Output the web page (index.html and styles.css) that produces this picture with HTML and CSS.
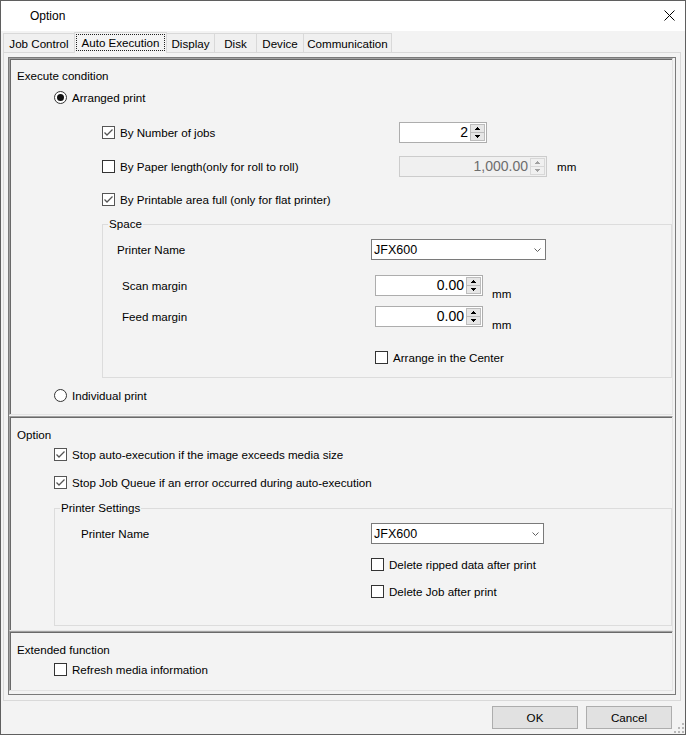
FILE: index.html
```html
<!DOCTYPE html>
<html>
<head>
<meta charset="utf-8">
<title>Option</title>
<link rel="stylesheet" href="styles.css">
</head>
<body>
<div class="window">
  <div class="titlebar">
    <span class="title">Option</span>
    <svg class="close" width="11" height="11" viewBox="0 0 11 11"><path d="M0.5 0.5 L10.5 10.5 M10.5 0.5 L0.5 10.5" stroke="#000" stroke-width="1" fill="none"/></svg>
  </div>

  <div class="tabstrip">
    <div class="tab t1">Job Control</div>
    <div class="tab t2 sel"><span class="focus">Auto Execution</span></div>
    <div class="tab t3">Display</div>
    <div class="tab t4">Disk</div>
    <div class="tab t5">Device</div>
    <div class="tab t6">Communication</div>
  </div>

  <div class="tabpage">
    <div class="frame">

      <div class="panel p1">
        <div class="row head">Execute condition</div>
        <div class="row ind-radio">
          <svg class="rb" width="13" height="13" viewBox="0 0 13 13"><circle cx="6.5" cy="6.5" r="6" fill="#fff" stroke="#333"/><circle cx="6.5" cy="6.5" r="3.5" fill="#111"/></svg>
          <span class="txt">Arranged print</span>
        </div>
        <div class="row ind-sub r-jobs">
          <span class="chk w-opt">
            <span class="cb on"><svg width="11" height="11" viewBox="0 0 11 11"><path d="M1.5 5.5 L4 8 L9.5 2.5" stroke="#555" stroke-width="1.3" fill="none"/></svg></span>
            <span class="txt">By Number of jobs</span>
          </span>
          <div class="spin s-jobs">
            <span class="val">2</span>
            <span class="sbtns">
              <span class="sb"><svg width="5" height="3" viewBox="0 0 5 3"><path d="M2 0h1v1h-1z M1 1h3v1h-3z M0 2h5v1h-5z" fill="#000"/></svg></span>
              <span class="sb"><svg width="5" height="3" viewBox="0 0 5 3"><path d="M0 0h5v1h-5z M1 1h3v1h-3z M2 2h1v1h-1z" fill="#000"/></svg></span>
            </span>
          </div>
        </div>
        <div class="row ind-sub r-paper">
          <span class="chk w-opt">
            <span class="cb"></span>
            <span class="txt">By Paper length(only for roll to roll)</span>
          </span>
          <div class="spin s-paper disabled">
            <span class="val">1,000.00</span>
            <span class="sbtns">
              <span class="sb"><svg width="5" height="3" viewBox="0 0 5 3"><path d="M2 0h1v1h-1z M1 1h3v1h-3z M0 2h5v1h-5z" fill="#a0a0a0"/></svg></span>
              <span class="sb"><svg width="5" height="3" viewBox="0 0 5 3"><path d="M0 0h5v1h-5z M1 1h3v1h-3z M2 2h1v1h-1z" fill="#a0a0a0"/></svg></span>
            </span>
          </div>
          <span class="mm mm-paper">mm</span>
        </div>
        <div class="row ind-sub r-area">
          <span class="chk">
            <span class="cb on"><svg width="11" height="11" viewBox="0 0 11 11"><path d="M1.5 5.5 L4 8 L9.5 2.5" stroke="#555" stroke-width="1.3" fill="none"/></svg></span>
            <span class="txt">By Printable area full (only for flat printer)</span>
          </span>
        </div>

        <fieldset class="group g-space">
          <legend>Space</legend>
          <div class="frow r-sp-printer">
            <span class="flabel w-sp-printer">Printer Name</span>
            <div class="combo c-space"><span>JFX600</span><svg width="7" height="4" viewBox="0 0 7 4"><path d="M0.5 0.5 L3.5 3.5 L6.5 0.5" stroke="#606060" fill="none"/></svg></div>
          </div>
          <div class="frow r-scan">
            <span class="flabel w-margin">Scan margin</span>
            <div class="spin s-margin">
              <span class="val">0.00</span>
              <span class="sbtns">
                <span class="sb"><svg width="5" height="3" viewBox="0 0 5 3"><path d="M2 0h1v1h-1z M1 1h3v1h-3z M0 2h5v1h-5z" fill="#000"/></svg></span>
                <span class="sb"><svg width="5" height="3" viewBox="0 0 5 3"><path d="M0 0h5v1h-5z M1 1h3v1h-3z M2 2h1v1h-1z" fill="#000"/></svg></span>
              </span>
            </div>
            <span class="mm mm-low">mm</span>
          </div>
          <div class="frow r-feed">
            <span class="flabel w-margin">Feed margin</span>
            <div class="spin s-margin">
              <span class="val">0.00</span>
              <span class="sbtns">
                <span class="sb"><svg width="5" height="3" viewBox="0 0 5 3"><path d="M2 0h1v1h-1z M1 1h3v1h-3z M0 2h5v1h-5z" fill="#000"/></svg></span>
                <span class="sb"><svg width="5" height="3" viewBox="0 0 5 3"><path d="M0 0h5v1h-5z M1 1h3v1h-3z M2 2h1v1h-1z" fill="#000"/></svg></span>
              </span>
            </div>
            <span class="mm mm-low">mm</span>
          </div>
          <div class="row r-center">
            <span class="cb"></span>
            <span class="txt">Arrange in the Center</span>
          </div>
        </fieldset>

        <div class="row ind-radio r-indiv">
          <svg class="rb" width="13" height="13" viewBox="0 0 13 13"><circle cx="6.5" cy="6.5" r="6" fill="#fff" stroke="#333"/></svg>
          <span class="txt">Individual print</span>
        </div>
      </div>

      <div class="panel p2">
        <div class="row head short">Option</div>
        <div class="row ind-radio short">
          <span class="cb on"><svg width="11" height="11" viewBox="0 0 11 11"><path d="M1.5 5.5 L4 8 L9.5 2.5" stroke="#555" stroke-width="1.3" fill="none"/></svg></span>
          <span class="txt">Stop auto-execution if the image exceeds media size</span>
        </div>
        <div class="row ind-radio short r-queue">
          <span class="cb on"><svg width="11" height="11" viewBox="0 0 11 11"><path d="M1.5 5.5 L4 8 L9.5 2.5" stroke="#555" stroke-width="1.3" fill="none"/></svg></span>
          <span class="txt">Stop Job Queue if an error occurred during auto-execution</span>
        </div>

        <fieldset class="group g-printer">
          <legend>Printer Settings</legend>
          <div class="frow r-ps-printer">
            <span class="flabel w-ps-printer">Printer Name</span>
            <div class="combo c-ps"><span>JFX600</span><svg width="7" height="4" viewBox="0 0 7 4"><path d="M0.5 0.5 L3.5 3.5 L6.5 0.5" stroke="#606060" fill="none"/></svg></div>
          </div>
          <div class="row r-del1">
            <span class="cb"></span>
            <span class="txt">Delete ripped data after print</span>
          </div>
          <div class="row r-del2">
            <span class="cb"></span>
            <span class="txt">Delete Job after print</span>
          </div>
        </fieldset>
      </div>

      <div class="panel p3">
        <div class="row head short">Extended function</div>
        <div class="row ind-radio short">
          <span class="cb"></span>
          <span class="txt">Refresh media information</span>
        </div>
      </div>

    </div>
  </div>

  <div class="btnrow">
    <div class="btn">OK</div>
    <div class="btn">Cancel</div>
  </div>

  <svg class="grip" width="10" height="10" viewBox="0 0 10 10">
    <path d="M8 0h2v2h-2z M8 4h2v2h-2z M4 4h2v2h-2z M8 8h2v2h-2z M4 8h2v2h-2z M0 8h2v2h-2z" fill="#b8b8b8"/>
  </svg>
</div>
</body>
</html>
```

FILE: styles.css
```css
* { box-sizing: border-box; }

body {
  margin: 0;
  font-family: "Liberation Sans", Arial, sans-serif;
  font-size: 11.6px;
  color: #000;
  background: #f3f3f3;
}

.window {
  position: relative;
  width: 686px;
  height: 735px;
  border: 1px solid #5f5f5f;
  background: #f3f3f3;
}

/* title bar */
.titlebar {
  height: 30px;
  background: #fff;
  display: flex;
  align-items: center;
  padding-left: 29px;
}
.title { font-size: 12px; }
.close { margin-left: auto; margin-right: 10px; margin-top: -1px; }

/* tabs */
.tabstrip {
  height: 21px;
  display: flex;
  align-items: flex-end;
  padding-left: 2px;
}
.tab {
  height: 19px;
  border: 1px solid #d9d9d9;
  border-bottom: none;
  margin-left: -1px;
  display: flex;
  align-items: center;
  justify-content: center;
  background: #f0f0f0;
  white-space: nowrap;
}
.tab.t1 { margin-left: 0; width: 72px; }
.tab.t2 { width: 93px; }
.tab.t3 { width: 49px; }
.tab.t4 { width: 43px; }
.tab.t5 { width: 48px; }
.tab.t6 { width: 89px; }
.tab.sel {
  height: 21px;
  margin-bottom: -1px;
  background: #f3f3f3;
  position: relative;
  z-index: 1;
  align-items: flex-start;
  padding-top: 1px;
}
.focus {
  width: 89px;
  height: 17px;
  border: 1px dotted #222;
  display: flex;
  align-items: center;
  justify-content: center;
}

/* tab page */
.tabpage {
  margin-left: 2px;
  width: 678px;
  border: 1px solid #d9d9d9;
  padding: 4px 4px 5px 4px;
  background: #f3f3f3;
}
.frame {
  border: 1px solid #7a7a7a;
  padding: 0 2px 3px 0;
}

.panel {
  border-top: 1px solid #a0a0a0;
  border-left: 1px solid #a0a0a0;
  border-right: 1px solid #e3e3e3;
  border-bottom: 1px solid #e3e3e3;
  box-shadow: inset 1px 1px 0 #696969;
}
.p1 { height: 357px; padding-top: 5px; }
.p2 { height: 215px; padding-top: 7px; margin-top: 1px; }
.p3 { height: 60px; padding-top: 7px; }

/* rows */
.row {
  display: flex;
  align-items: center;
  height: 22px;
  white-space: nowrap;
}
.row.short { height: 20px; }
.head { padding-left: 7px; }
.ind-radio { padding-left: 44px; }
.ind-sub { padding-left: 92px; }
.r-jobs { margin-top: 13px; }
.r-paper { margin-top: 12px; }
.r-area { margin-top: 11px; }
.r-indiv { margin-top: 6px; }
.r-queue { margin-top: 8px; }

.txt { margin-left: 5px; }
.chk { display: flex; align-items: center; }
.w-opt { width: 297px; }

/* controls */
.cb {
  width: 13px;
  height: 13px;
  border: 1px solid #333;
  background: #fff;
  flex: none;
  display: flex;
}
.cb.on { border-color: #555; }
.cb svg { display: block; }
.rb { display: block; flex: none; }

.spin {
  height: 21px;
  border: 1px solid #adadad;
  background: #fff;
  display: flex;
  flex: none;
}
.spin .val {
  flex: 1;
  text-align: right;
  padding-right: 2px;
  font-size: 14px;
  line-height: 19px;
}
.sbtns {
  width: 15px;
  display: flex;
  flex-direction: column;
  margin: 1px 1px 1px 0;
}
.sb {
  flex: 1;
  background: #e6e6e6;
  border: 1px solid #bcbcbc;
  display: flex;
  align-items: center;
  justify-content: center;
}
.sb + .sb { border-top: none; }
.sb svg { display: block; }
.spin.disabled { background: #f0f0f0; border-color: #cccccc; color: #6d6d6d; }
.spin.disabled .sb { background: #f0f0f0; border-color: #d8d8d8; }
.s-jobs { width: 88px; }
.s-paper { width: 148px; }
.s-margin { width: 108px; }

.mm { white-space: nowrap; }
.mm-paper { margin-left: 10px; }
.mm-low { margin-left: 9px; margin-top: 16px; }

.combo {
  height: 21px;
  border: 1px solid #7a7a7a;
  background: #fff;
  display: flex;
  align-items: center;
  padding-left: 2px;
  font-size: 12.5px;
  flex: none;
}
.combo svg { margin-left: auto; margin-right: 4px; display: block; }
.c-space { width: 175px; }
.c-ps { width: 173px; }

/* group boxes */
.group {
  margin: 0;
  padding: 0 0 9px 0;
  border: 1px solid #dcdcdc;
  min-width: 0;
}
.group legend {
  padding: 0 1px;
  margin-left: 5px;
  line-height: 14px;
}
.g-space { margin: 7px 0 0 92px; }
.g-printer { margin: 9px 0 0 44px; padding-bottom: 23px; }

.frow {
  display: flex;
  align-items: center;
  height: 21px;
  white-space: nowrap;
}
.flabel { flex: none; }
.r-sp-printer { margin-top: 8px; padding-left: 14px; }
.w-sp-printer { width: 254px; }
.r-scan { margin-top: 15px; padding-left: 19px; }
.r-feed { margin-top: 10px; padding-left: 19px; }
.w-margin { width: 253px; }
.r-center { margin-top: 19px; padding-left: 272px; }

.r-ps-printer { margin-top: 8px; padding-left: 26px; }
.w-ps-printer { width: 290px; }
.r-del1 { margin-top: 9px; padding-left: 316px; }
.r-del2 { margin-top: 5px; padding-left: 316px; }

/* buttons */
.btnrow {
  display: flex;
  justify-content: flex-end;
  gap: 8px;
  padding-right: 13px;
  margin-top: 5px;
}
.btn {
  width: 86px;
  height: 23px;
  background: #e1e1e1;
  border: 1px solid #adadad;
  display: flex;
  align-items: center;
  justify-content: center;
}

.grip {
  position: absolute;
  right: 1px;
  bottom: 1px;
}
```
